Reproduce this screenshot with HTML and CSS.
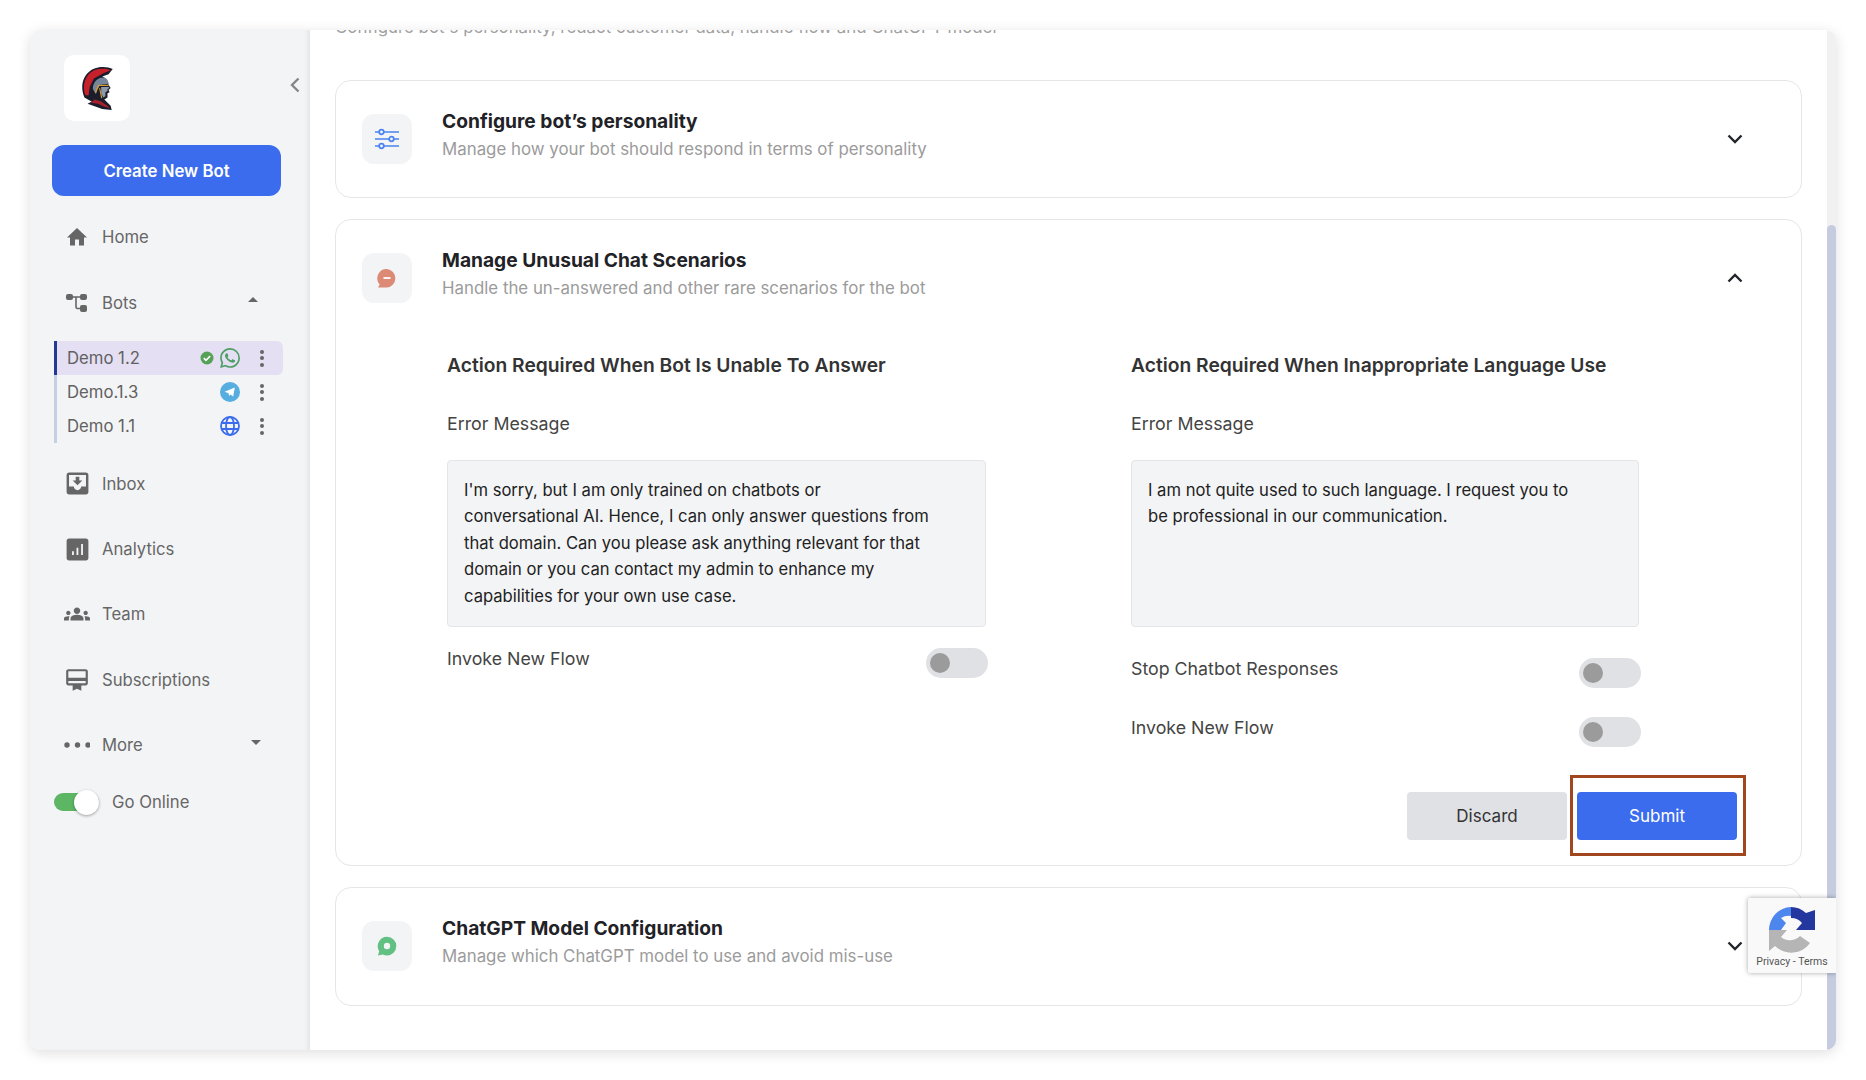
FILE: index.html
```html
<!DOCTYPE html>
<html lang="en">
<head>
<meta charset="utf-8">
<title>Bot settings</title>
<link rel="stylesheet" href="styles.css">
</head>
<body>
<div class="app">
  <aside class="sidebar">
    <div class="brand">
      <div class="logo">
        <svg width="32" height="43" viewBox="0 0 30 41">
          <path d="M30 2C24-1 13-1 7 5 1 10-1 20 3 29l5 3 2 1-4 2 14 5 9 1-1-4-6-6 3-2 0-4 2-1-1-2 2-2-2-3c0-4-3-7-6-8l6-2z" fill="#1b1d2a"/>
          <path d="M28 3C22 1 13 1 8 6 3 11 1 19 4 27l3 0 1-8 4-8 9-5z" fill="#c8202a"/>
          <path d="M11 21c0-7 5-11 10-11 3 0 5 3 5 6l-8 1-3 5-1 4z" fill="#75869d"/>
          <path d="M19 19h7l1 1-2 1 0 2-2 1 0 4-2 1-2-4z" fill="#8d99a8"/>
          <path d="M13 24l3-7h10v1H17l-3 7zM17 20l2 10 1-1-2-9z" fill="#d49a3a"/>
          <path d="M9 34l4-3 6 2 6 4 2 2-5-1-6-3z" fill="#a71f2a"/>
        </svg>
      </div>
      <svg class="collapse" width="14" height="18" viewBox="0 0 14 18"><path d="M10.5 2.5 4 9l6.5 6.5" fill="none" stroke="#868686" stroke-width="2.4"/></svg>
    </div>
    <button class="create">Create New Bot</button>
    <nav class="nav">
      <div class="nav-row nav-first">
        <span class="nav-icon"><svg width="24" height="24" viewBox="0 0 24 24"><path d="M10 20.5v-6h4v6h5v-8h3L12 3 2 12.500h3v8z" fill="#666"/></svg></span>
        <span>Home</span>
      </div>
      <div class="nav-row">
        <span class="nav-icon"><svg width="22" height="20" viewBox="0 0 22 20"><rect x="0" y="1" width="7" height="6" rx="2" fill="#666"/><rect x="14" y="1" width="7" height="6" rx="2" fill="#666"/><rect x="14" y="12" width="7" height="7" rx="2" fill="#666"/><path d="M6 4h9M10 4v10c0 1 .5 1.500 1.500 1.500H15" fill="none" stroke="#666" stroke-width="1.600"/></svg></span>
        <span>Bots</span>
        <span class="caret caret-up"></span>
      </div>
      <ul class="bot-list">
        <li class="bot bot-active">
          <span class="bot-name">Demo 1.2</span>
          <svg class="check" width="14" height="14" viewBox="0 0 14 14"><circle cx="7" cy="7" r="6.500" fill="#55a157"/><path d="M3.800 7.200 6 9.300l4.200-4.300" fill="none" stroke="#fff" stroke-width="1.700"/></svg>
          <svg class="channel" width="20" height="20" viewBox="0 0 24 24"><path fill="#4c9e64" d="M17.472 14.382c-.297-.149-1.758-.867-2.03-.967-.273-.099-.471-.148-.67.15-.197.297-.767.966-.94 1.164-.173.199-.347.223-.644.075-.297-.15-1.255-.463-2.39-1.475-.883-.788-1.48-1.761-1.653-2.059-.173-.297-.018-.458.13-.606.134-.133.298-.347.446-.52.149-.174.198-.298.298-.497.099-.198.05-.371-.025-.52-.075-.149-.669-1.612-.916-2.207-.242-.579-.487-.5-.669-.51-.173-.008-.371-.01-.57-.01-.198 0-.52.074-.792.372-.272.297-1.04 1.016-1.04 2.479 0 1.462 1.065 2.875 1.213 3.074.149.198 2.096 3.2 5.077 4.487.709.306 1.262.489 1.694.625.712.227 1.36.195 1.871.118.571-.085 1.758-.719 2.006-1.413.248-.694.248-1.289.173-1.413-.074-.124-.272-.198-.57-.347m-5.421 7.403h-.004a9.87 9.87 0 01-5.031-1.378l-.361-.214-3.741.982.998-3.648-.235-.374a9.86 9.86 0 01-1.51-5.26c.001-5.45 4.436-9.884 9.888-9.884 2.64 0 5.122 1.03 6.988 2.898a9.825 9.825 0 012.893 6.994c-.003 5.45-4.437 9.884-9.885 9.884m8.413-18.297A11.815 11.815 0 0012.05 0C5.495 0 .16 5.335.157 11.892c0 2.096.547 4.142 1.588 5.945L.057 24l6.305-1.654a11.882 11.882 0 005.683 1.448h.005c6.554 0 11.89-5.335 11.893-11.893a11.821 11.821 0 00-3.48-8.413z"/></svg>
          <span class="kebab"><i></i><i></i><i></i></span>
        </li>
        <li class="bot">
          <span class="bot-name">Demo.1.3</span>
          <svg class="channel" width="20" height="20" viewBox="0 0 20 20"><circle cx="10" cy="10" r="10" fill="#55ade0"/><path d="M4.500 9.800 14.800 5.600 13.200 14.600 10.400 12.400 9 14 8.600 11.200z" fill="#fff"/></svg>
          <span class="kebab"><i></i><i></i><i></i></span>
        </li>
        <li class="bot">
          <span class="bot-name">Demo 1.1</span>
          <svg class="channel" width="20" height="20" viewBox="0 0 20 20"><g fill="none" stroke="#3b6ced" stroke-width="1.800"><circle cx="10" cy="10" r="9"/><ellipse cx="10" cy="10" rx="4" ry="9"/><path d="M1.500 7h17M1.500 13h17"/></g></svg>
          <span class="kebab"><i></i><i></i><i></i></span>
        </li>
      </ul>
      <div class="nav-row">
        <span class="nav-icon"><svg width="23" height="23" viewBox="2.500 2.500 19 19"><path fill="#666" d="M19 3H5c-1.100 0-2 .9-2 2v14c0 1.100.9 2 2 2h14c1.100 0 2-.9 2-2V5c0-1.100-.9-2-2-2zm0 11.500h-4c0 1.660-1.350 3-3 3s-3-1.340-3-3H5V5h14zM16 9.500h-2.500V6.500h-3v3H8l4 4z"/></svg></span>
        <span>Inbox</span>
      </div>
      <div class="nav-row">
        <span class="nav-icon"><svg width="23" height="23" viewBox="2.500 2.500 19 19"><path fill="#666" fill-rule="evenodd" d="M19 3H5c-1.100 0-2 .9-2 2v14c0 1.100.9 2 2 2h14c1.100 0 2-.9 2-2V5c0-1.100-.9-2-2-2zM9 16.500H7.500v-3H9zm3.700 0h-1.500v-6h1.500zm3.800 0H15v-9h1.500z"/></svg></span>
        <span>Analytics</span>
      </div>
      <div class="nav-row">
        <span class="nav-icon"><svg width="26" height="26" viewBox="0 0 24 24"><path fill="#666" d="M12 12.750c1.630 0 3.070.39 4.240.9 1.080.48 1.760 1.560 1.760 2.730V18H6v-1.610c0-1.180.68-2.260 1.760-2.730 1.170-.52 2.610-.91 4.240-.91zM4 13c1.100 0 2-.9 2-2s-.9-2-2-2-2 .9-2 2 .9 2 2 2zm1.130 1.100c-.37-.06-.74-.1-1.130-.1-.99 0-1.930.21-2.780.58C.48 14.900 0 15.620 0 16.430V18h4.500v-1.610c0-.83.23-1.610.63-2.290zM20 13c1.100 0 2-.9 2-2s-.9-2-2-2-2 .9-2 2 .9 2 2 2zm4 3.430c0-.81-.48-1.530-1.220-1.850-.85-.37-1.790-.58-2.780-.58-.39 0-.76.04-1.130.1.4.68.63 1.460.63 2.290V18H24v-1.570zM12 6c1.660 0 3 1.340 3 3s-1.340 3-3 3-3-1.340-3-3 1.340-3 3-3z"/></svg></span>
        <span>Team</span>
      </div>
      <div class="nav-row">
        <span class="nav-icon"><svg width="26" height="26" viewBox="0 0 24 24"><path fill="#666" d="M20 2H4c-1.110 0-2 .89-2 2v11c0 1.110.89 2 2 2h4v5l4-2 4 2v-5h4c1.110 0 2-.89 2-2V4c0-1.110-.89-2-2-2zm0 13H4v-2h16zm0-5H4V4h16z"/></svg></span>
        <span>Subscriptions</span>
      </div>
      <div class="nav-row">
        <span class="nav-icon"><svg width="26" height="8" viewBox="0 0 26 8"><circle cx="3" cy="4" r="2.700" fill="#666"/><circle cx="13.500" cy="4" r="2.700" fill="#666"/><circle cx="24" cy="4" r="2.700" fill="#666"/></svg></span>
        <span>More</span>
        <span class="caret caret-down"></span>
      </div>
      <div class="online">
        <span class="online-switch"><span class="online-knob"></span></span>
        <span>Go Online</span>
      </div>
    </nav>
  </aside>

  <main class="main">
    <div class="content">
      <p class="intro">Configure bot's personality, redact customer data, handle flow and ChatGPT model</p>

      <section class="card">
        <header class="card-head">
          <div class="tile">
            <svg width="24" height="22" viewBox="0 0 24 22"><g fill="none" stroke="#4a82f0" stroke-width="1.700"><path d="M0 4h24M0 11h24M0 18h24"/><g fill="#f3f4f6"><circle cx="6.500" cy="4" r="2.300"/><circle cx="16.500" cy="11" r="2.300"/><circle cx="6.500" cy="18" r="2.300"/></g></g></svg>
          </div>
          <div class="card-text">
            <h2>Configure bot’s personality</h2>
            <p>Manage how your bot should respond in terms of personality</p>
          </div>
          <svg class="chev" width="24" height="24" viewBox="0 0 24 24"><path d="M5.500 8.500 12 15l6.500-6.500" fill="none" stroke="#22262b" stroke-width="2.400"/></svg>
        </header>
      </section>

      <section class="card">
        <header class="card-head">
          <div class="tile">
            <svg width="20" height="20" viewBox="0 0 20 20"><path d="M10 1a9.300 9.300 0 0 1 0 18.500H1l1.700-3A9.300 9.300 0 0 1 10 1z" fill="#dc8a76"/><path d="M6.500 10h7" stroke="#fff" stroke-width="1.800"/></svg>
          </div>
          <div class="card-text">
            <h2>Manage Unusual Chat Scenarios</h2>
            <p>Handle the un-answered and other rare scenarios for the bot</p>
          </div>
          <svg class="chev" width="24" height="24" viewBox="0 0 24 24"><path d="M5.500 15.500 12 9l6.500 6.500" fill="none" stroke="#22262b" stroke-width="2.400"/></svg>
        </header>
        <div class="card-body">
          <div class="cols">
            <div class="col col-left">
              <h3>Action Required When Bot Is Unable To Answer</h3>
              <label class="field-label">Error Message</label>
              <div class="message">I'm sorry, but I am only trained on chatbots or<br>conversational AI. Hence, I can only answer questions from<br>that domain. Can you please ask anything relevant for that<br>domain or you can contact my admin to enhance my<br>capabilities for your own use case.</div>
              <div class="toggle-row toggle-first">
                <span>Invoke New Flow</span>
                <span class="switch"><span class="switch-knob"></span></span>
              </div>
            </div>
            <div class="col col-right">
              <h3>Action Required When Inappropriate Language Use</h3>
              <label class="field-label">Error Message</label>
              <div class="message">I am not quite used to such language. I request you to<br>be professional in our communication.</div>
              <div class="toggle-row toggle-stop">
                <span>Stop Chatbot Responses</span>
                <span class="switch"><span class="switch-knob"></span></span>
              </div>
              <div class="toggle-row toggle-next">
                <span>Invoke New Flow</span>
                <span class="switch"><span class="switch-knob"></span></span>
              </div>
            </div>
          </div>
          <div class="actions">
            <button class="btn btn-discard">Discard</button>
            <div class="submit-wrap">
              <button class="btn btn-submit">Submit</button>
              <span class="annotation"></span>
            </div>
          </div>
        </div>
      </section>

      <section class="card card-last">
        <header class="card-head">
          <div class="tile">
            <svg width="20" height="20" viewBox="0 0 20 20"><path d="M10 .8a9.300 9.300 0 0 1 0 18.600c-1.500 0-3-.4-4.200-1L1 19.400l1.200-4.300A9.300 9.300 0 0 1 10 .8z" fill="#62c083"/><circle cx="10" cy="10" r="3.200" fill="#f3f4f6"/></svg>
          </div>
          <div class="card-text">
            <h2>ChatGPT Model Configuration</h2>
            <p>Manage which ChatGPT model to use and avoid mis-use</p>
          </div>
          <svg class="chev" width="24" height="24" viewBox="0 0 24 24"><path d="M5.500 8.500 12 15l6.500-6.500" fill="none" stroke="#22262b" stroke-width="2.400"/></svg>
        </header>
      </section>
    </div>
  </main>

  <div class="scrollbar"><div class="thumb"></div></div>

  <div class="recaptcha">
    <svg width="48" height="48" viewBox="0 0 48 48">
      <path d="M23 1a23 23 0 0 0-22 23h12l5-7-5-5a14 14 0 0 1 10-2z" fill="#4d86ec"/>
      <path d="M23 1a23 23 0 0 1 15 6l9-3v20H28l6-7a14 14 0 0 0-11-5z" fill="#23379f"/>
      <path d="M1 24h18l-6 7a14 14 0 0 0 19-1l10 7A23 23 0 0 1 7 40l-6 5z" fill="#b5b5b5"/>
    </svg>
    <span class="recaptcha-links">Privacy - Terms</span>
  </div>
</div>
</body>
</html>
```

FILE: styles.css
```css
* { box-sizing: border-box; }
html, body { margin: 0; padding: 0; }
body {
  width: 1866px;
  height: 1080px;
  padding: 30px;
  background: #fff;
  font-family: Inter, "Noto Sans", sans-serif;
  overflow: hidden;
}
h2, h3, p, ul { margin: 0; padding: 0; }
button { font-family: inherit; border: 0; cursor: pointer; }

.app {
  position: relative;
  display: flex;
  height: 1020px;
  background: #fff;
  border-radius: 10px;
  overflow: hidden;
  box-shadow: 0 3px 14px rgba(0,0,0,.13);
}

/* Sidebar */
.sidebar {
  flex: 0 0 280px;
  min-width: 0;
  padding: 0 29px 0 22px;
  background: #f3f4f6;
  box-shadow: inset -5px 0 5px -3px rgba(0,0,0,.07);
  color: #666;
  font-size: 16.7px;
}
.brand {
  display: flex;
  align-items: center;
  justify-content: space-between;
  padding: 25px 0 0 12px;
  position: relative;
}
.logo {
  width: 66px;
  height: 66px;
  background: #fff;
  border-radius: 10px;
  display: flex;
  align-items: center;
  justify-content: center;
}
.collapse { margin: -6px -21px 0 0; }
.create {
  display: block;
  width: 229px;
  height: 51px;
  margin-top: 24px;
  border-radius: 12px;
  background: #3b6ced;
  color: #fff;
  font-size: 16.8px;
  font-weight: 600;
}
.nav-row {
  display: flex;
  align-items: center;
  height: 65.2px;
  padding-left: 12px;
  gap: 12px;
}
.nav-first { margin-top: 8px; height: 66.2px; }
.nav-icon {
  flex: 0 0 26px;
  display: flex;
  align-items: center;
  justify-content: center;
}
.caret {
  width: 0;
  height: 0;
  margin-left: auto;
  border-left: 5px solid transparent;
  border-right: 5px solid transparent;
}
.caret-up { border-bottom: 5px solid #666; margin: -6px 23px 0 auto; }
.caret-down { border-top: 5px solid #666; margin: -4px 20px 0 auto; }

.bot-list {
  list-style: none;
  margin: 6px 0 8px 2px;
  width: 229px;
  border-left: 3px solid #c6cfe4;
}
.bot {
  display: flex;
  align-items: center;
  height: 34px;
  padding-left: 10px;
  position: relative;
  color: #616161;
}
.bot-active {
  background: #e4dff3;
  border-radius: 0 6px 6px 0;
  box-shadow: -3px 0 0 #22399a;
}
.bot-name { flex: 1; }
.check { margin-right: 6px; }
.channel { margin-right: 20px; }
.kebab {
  display: flex;
  flex-direction: column;
  gap: 2.5px;
  margin-right: 19px;
}
.kebab i {
  width: 4px;
  height: 4px;
  background: #666;
  border-radius: 50%;
}

.online {
  display: flex;
  align-items: center;
  gap: 13px;
  height: 50px;
  padding-left: 2px;
}
.online-switch {
  display: block;
  width: 45px;
  height: 18px;
  border-radius: 9px;
  background: #5cb664;
  position: relative;
}
.online-knob {
  position: absolute;
  right: 0;
  top: -3.500px;
  width: 25px;
  height: 25px;
  border-radius: 50%;
  background: #fff;
  box-shadow: 0 1px 3px rgba(0,0,0,.35);
}

/* Main */
.main {
  flex: 1;
  overflow: hidden;
  min-width: 0;
}
.content { padding: 0 25px; }
.intro {
  margin-top: -15px;
  margin-bottom: 41px;
  font-size: 16.85px;
  line-height: 24px;
  color: #a0a0a0;
  white-space: nowrap;
}
.card {
  border: 1px solid #e5e6e8;
  border-radius: 16px;
  margin-bottom: 21px;
  background: #fff;
}
.card-head {
  display: flex;
  align-items: flex-start;
  height: 116px;
  padding: 28px 54px 0 26px;
}
.card-last .card-head { height: 117px; }
.tile {
  flex: 0 0 50px;
  width: 50px;
  height: 50px;
  margin-top: 5px;
  border-radius: 12px;
  background: #f3f4f6;
  display: flex;
  align-items: center;
  justify-content: center;
}
.card-text { flex: 1; margin-left: 30px; }
.card-text h2 {
  font-size: 19.2px;
  line-height: 24px;
  font-weight: 700;
  color: #1f2226;
}
.card-text p {
  margin-top: 4px;
  font-size: 16.85px;
  line-height: 24px;
  color: #9b9b9b;
}
.chev { margin-top: 18px; }

.card-body { padding: 17px 64px 25px 111px; }
.cols {
  display: grid;
  grid-template-columns: 684px 510px;
}
.col h3 {
  font-size: 19.25px;
  line-height: 24px;
  font-weight: 600;
  color: #333;
}
.field-label {
  display: block;
  margin-top: 35px;
  font-size: 17.8px;
  line-height: 24px;
  color: #444;
}
.message {
  height: 167px;
  margin-top: 24px;
  padding: 16px 16px;
  background: #f3f4f6;
  border: 1.500px solid #e4e5e8;
  border-radius: 4px;
  font-size: 16.6px;
  line-height: 26.400px;
  color: #222;
  white-space: nowrap;
}
.col-left .message { width: 538.5px; }
.col-right .message { width: 507.5px; }
.col-left { width: 541px; }
.toggle-row {
  display: flex;
  justify-content: space-between;
  align-items: flex-start;
  font-size: 17.8px;
  line-height: 22px;
  color: #444;
}
.toggle-first { margin-top: 21px; }
.toggle-stop { margin-top: 31px; }
.toggle-next { margin-top: 29px; }
.switch {
  display: block;
  width: 62px;
  height: 30px;
  border-radius: 15px;
  background: #e0e1e5;
  padding: 5px 4px;
}
.switch-knob {
  display: block;
  width: 20px;
  height: 20px;
  border-radius: 50%;
  background: #9b9b9b;
}
.actions {
  display: flex;
  justify-content: flex-end;
  gap: 10px;
  margin-top: 45px;
}
.btn {
  display: block;
  width: 160px;
  height: 48px;
  border-radius: 4px;
  font-size: 17px;
}
.btn-discard { background: #e0e1e5; color: #333; }
.btn-submit { background: #3b6ced; color: #fff; }
.submit-wrap { position: relative; }
.annotation {
  position: absolute;
  left: -7px;
  right: -9px;
  top: -17px;
  bottom: -16px;
  border: 3px solid #a0471f;
  pointer-events: none;
}

/* Scrollbar */
.scrollbar {
  flex: 0 0 9px;
  padding-top: 195px;
  background: #f1f1f1;
}
.thumb {
  height: 100%;
  background: #c5cce0;
  border-radius: 5px 5px 0 0;
}

/* reCAPTCHA */
.recaptcha {
  position: absolute;
  right: 0;
  top: 868px;
  width: 88px;
  height: 75px;
  background: #f9f9f9;
  box-shadow: 0 0 5px rgba(0,0,0,.35);
  border-radius: 2px 0 0 2px;
  display: flex;
  flex-direction: column;
  align-items: center;
  padding-top: 8px;
}
.recaptcha-links {
  font-family: Roboto, sans-serif;
  font-size: 10.5px;
  line-height: 12px;
  margin-top: 2px;
  color: #555;
  white-space: nowrap;
}
```
